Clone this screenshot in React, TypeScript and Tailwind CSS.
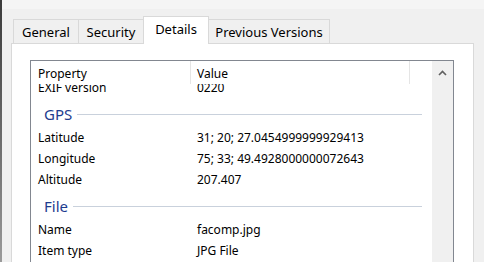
type Row =
  | { kind: "group"; label: string }
  | { kind: "item"; name: string; value: string };

const rows: Row[] = [
  { kind: "item", name: "EXIF version", value: "0220" },
  { kind: "group", label: "GPS" },
  { kind: "item", name: "Latitude", value: "31; 20; 27.0454999999929413" },
  { kind: "item", name: "Longitude", value: "75; 33; 49.4928000000072643" },
  { kind: "item", name: "Altitude", value: "207.407" },
  { kind: "group", label: "File" },
  { kind: "item", name: "Name", value: "facomp.jpg" },
  { kind: "item", name: "Item type", value: "JPG File" },
];

const tabs = ["General", "Security", "Details", "Previous Versions"];
const tabWidths: Record<string, string> = {
  General: "w-[66px]",
  Security: "w-[66px]",
  Details: "w-[66px]",
  "Previous Versions": "w-[122px]",
};

function Tab({ label, active }: { label: string; active: boolean }) {
  const base = "-ml-px flex items-center justify-center border border-b-0 border-[#d9d9d9] text-[13px] text-black";
  const width = tabWidths[label];
  if (active) {
    return (
      <div className={`${base} ${width} relative z-10 -mb-px h-[28px] bg-white pb-[1px]`}>{label}</div>
    );
  }
  return <div className={`${base} ${width} h-[24px] bg-[#f0f0f0] pt-[3px]`}>{label}</div>;
}

function ListRow({ row }: { row: Row }) {
  if (row.kind === "group") {
    return (
      <div className="flex h-[29px] items-center pl-[13px] pr-[10px] pt-[4px]">
        <span className="text-[15px] leading-none text-[#1e3c8f]">{row.label}</span>
        <div className="ml-[5px] h-px flex-1 bg-[#c9d1dc]" />
      </div>
    );
  }
  return (
    <div className="flex h-[21px] items-center text-[12px] text-black">
      <div className="w-[160px] pl-[7px]">{row.name}</div>
      <div className="pl-[6px]">{row.value}</div>
    </div>
  );
}

export default function App() {
  return (
    <div
      className="flex h-[262px] w-[484px] overflow-hidden bg-[#f0f0f0]"
      style={{ fontFamily: '"Noto Sans", "Open Sans", sans-serif' }}
    >
      <div className="w-[2px] shrink-0 bg-linear-to-b from-[#3c3c3c] to-[#9a9a9a]" />

      <div className="flex flex-1 flex-col">
        <div className="h-[9px] shrink-0 bg-[#f5f5f5]" />
        <div className="shrink-0 pl-[9px] pt-[7px]">
          <div className="flex h-[27px] items-end pl-[3px]">
            {tabs.map((t) => (
              <Tab key={t} label={t} active={t === "Details"} />
            ))}
          </div>

          <div className="h-[240px] w-[463px] border border-[#d9d9d9] bg-white pl-[18px] pt-[16px]">
            <div className="flex h-[220px] w-[424px] border border-[#828790] bg-white">
              <div className="flex flex-1 flex-col overflow-hidden">
                <div className="relative z-10 flex h-[23px] shrink-0 bg-white text-[12px] text-black">
                  <div className="flex w-[160px] items-center border-r border-[#e5e5e5] pl-[7px] pt-[3px]">Property</div>
                  <div className="flex w-[219px] items-center border-r border-[#e5e5e5] pl-[6px] pt-[3px]">Value</div>
                </div>
                <div className="overflow-hidden">
                  <div className="-mt-[7px]">
                    {rows.map((r, i) => (
                      <ListRow key={i} row={r} />
                    ))}
                  </div>
                </div>
              </div>

              <div className="w-[21px] shrink-0 bg-[#f0f0f0]">
                <svg className="mx-auto mt-[9px] block" width="9" height="6" viewBox="0 0 9 6">
                  <path d="M1 5 L4.5 1.5 L8 5" fill="none" stroke="#606060" strokeWidth="1.6" />
                </svg>
              </div>
            </div>
          </div>
        </div>
      </div>
    </div>
  );
}
